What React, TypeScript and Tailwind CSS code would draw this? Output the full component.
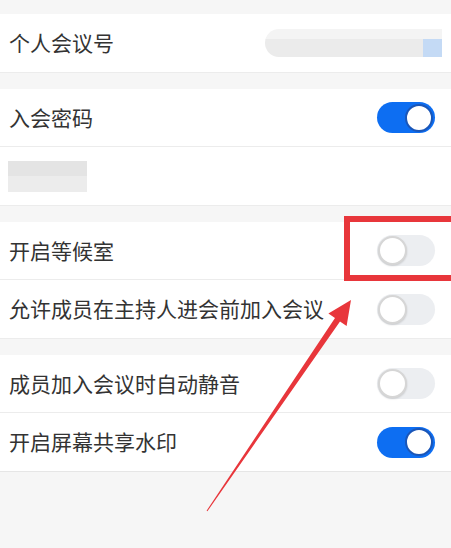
import { memo } from "react";

interface ToggleProps {
  on: boolean;
}

const Toggle = memo(({ on }: ToggleProps) => {
  if (on) {
    return (
      <div className="flex h-[31px] w-[58px] flex-none items-center justify-end rounded-full bg-[#0d6ef2] pr-[2px]">
        <div className="h-[28px] w-[28px] rounded-full border-2 border-[#1a56b8] bg-white" />
      </div>
    );
  }
  return (
    <div className="flex h-[31px] w-[58px] flex-none items-center rounded-full bg-[#eceef1] pl-[1px]">
      <div className="h-[29px] w-[29px] rounded-full border-2 border-[#d6d6d6] bg-white shadow-[0_1px_2px_rgba(0,0,0,0.15)]" />
    </div>
  );
});

interface RowProps {
  label?: string;
  divider?: boolean;
  children?: React.ReactNode;
}

const Row = ({ label, divider, children }: RowProps) => (
  <div
    className={`flex h-[58px] items-center justify-between bg-white pl-[9px] pr-[16px] ${
      divider ? "border-b border-[#ececec]" : ""
    }`}
  >
    {label && <span className="text-[21px] text-[#333]">{label}</span>}
    {children}
  </div>
);

const Gap = ({ h }: { h: string }) => <div className={`${h} bg-[#f6f6f6]`} />;

export default function App() {
  return (
    <div
      className="relative h-[548px] w-[451px] overflow-hidden bg-[#f6f6f6]"
      style={{ fontFamily: '"Noto Sans CJK SC", "Noto Sans", sans-serif' }}
    >
      <Gap h="h-[14px]" />
      <div className="border-b border-[#ececec]">
        <Row label="个人会议号">
          <div className="-mr-[7px] flex h-[28px] w-[177px] flex-col overflow-hidden rounded-l-full">
            <div className="h-[10px] bg-[#f4f4f4]" />
            <div className="flex flex-1">
              <div className="flex-1 bg-[#ebebeb]" />
              <div className="w-[19px] bg-[#c4daf5]" />
            </div>
          </div>
        </Row>
      </div>
      <Gap h="h-[16px]" />
      <div className="border-b border-[#ececec]">
        <Row label="入会密码" divider>
          <Toggle on />
        </Row>
        <div className="flex h-[58px] items-center bg-white pl-[8px]">
          <div className="flex h-[31px] w-[79px] flex-col">
            <div className="flex-1 bg-[#e4e4e4]" />
            <div className="flex-1 bg-[#ececec]" />
          </div>
        </div>
      </div>
      <Gap h="h-[16px]" />
      <div className="border-b border-[#ececec]">
        <Row label="开启等候室" divider>
          <Toggle on={false} />
        </Row>
        <Row label="允许成员在主持人进会前加入会议">
          <Toggle on={false} />
        </Row>
      </div>
      <Gap h="h-[16px]" />
      <div className="border-b border-[#e6e6e6]">
        <Row label="成员加入会议时自动静音" divider>
          <Toggle on={false} />
        </Row>
        <Row label="开启屏幕共享水印">
          <Toggle on />
        </Row>
      </div>

      {/* annotation: red box + arrow */}
      <div className="absolute left-[344px] top-[216px] h-[65px] w-[130px] border-[6px] border-[#e8363b]" />
      <svg
        className="pointer-events-none absolute left-0 top-0"
        width="451"
        height="548"
        viewBox="0 0 451 548"
      >
        <polygon
          fill="#e8363b"
          points="207.4,511.3 206.6,510.7 335,318.1 328.4,313.6 351,300 346.6,326 340,321.5"
        />
      </svg>
    </div>
  );
}
